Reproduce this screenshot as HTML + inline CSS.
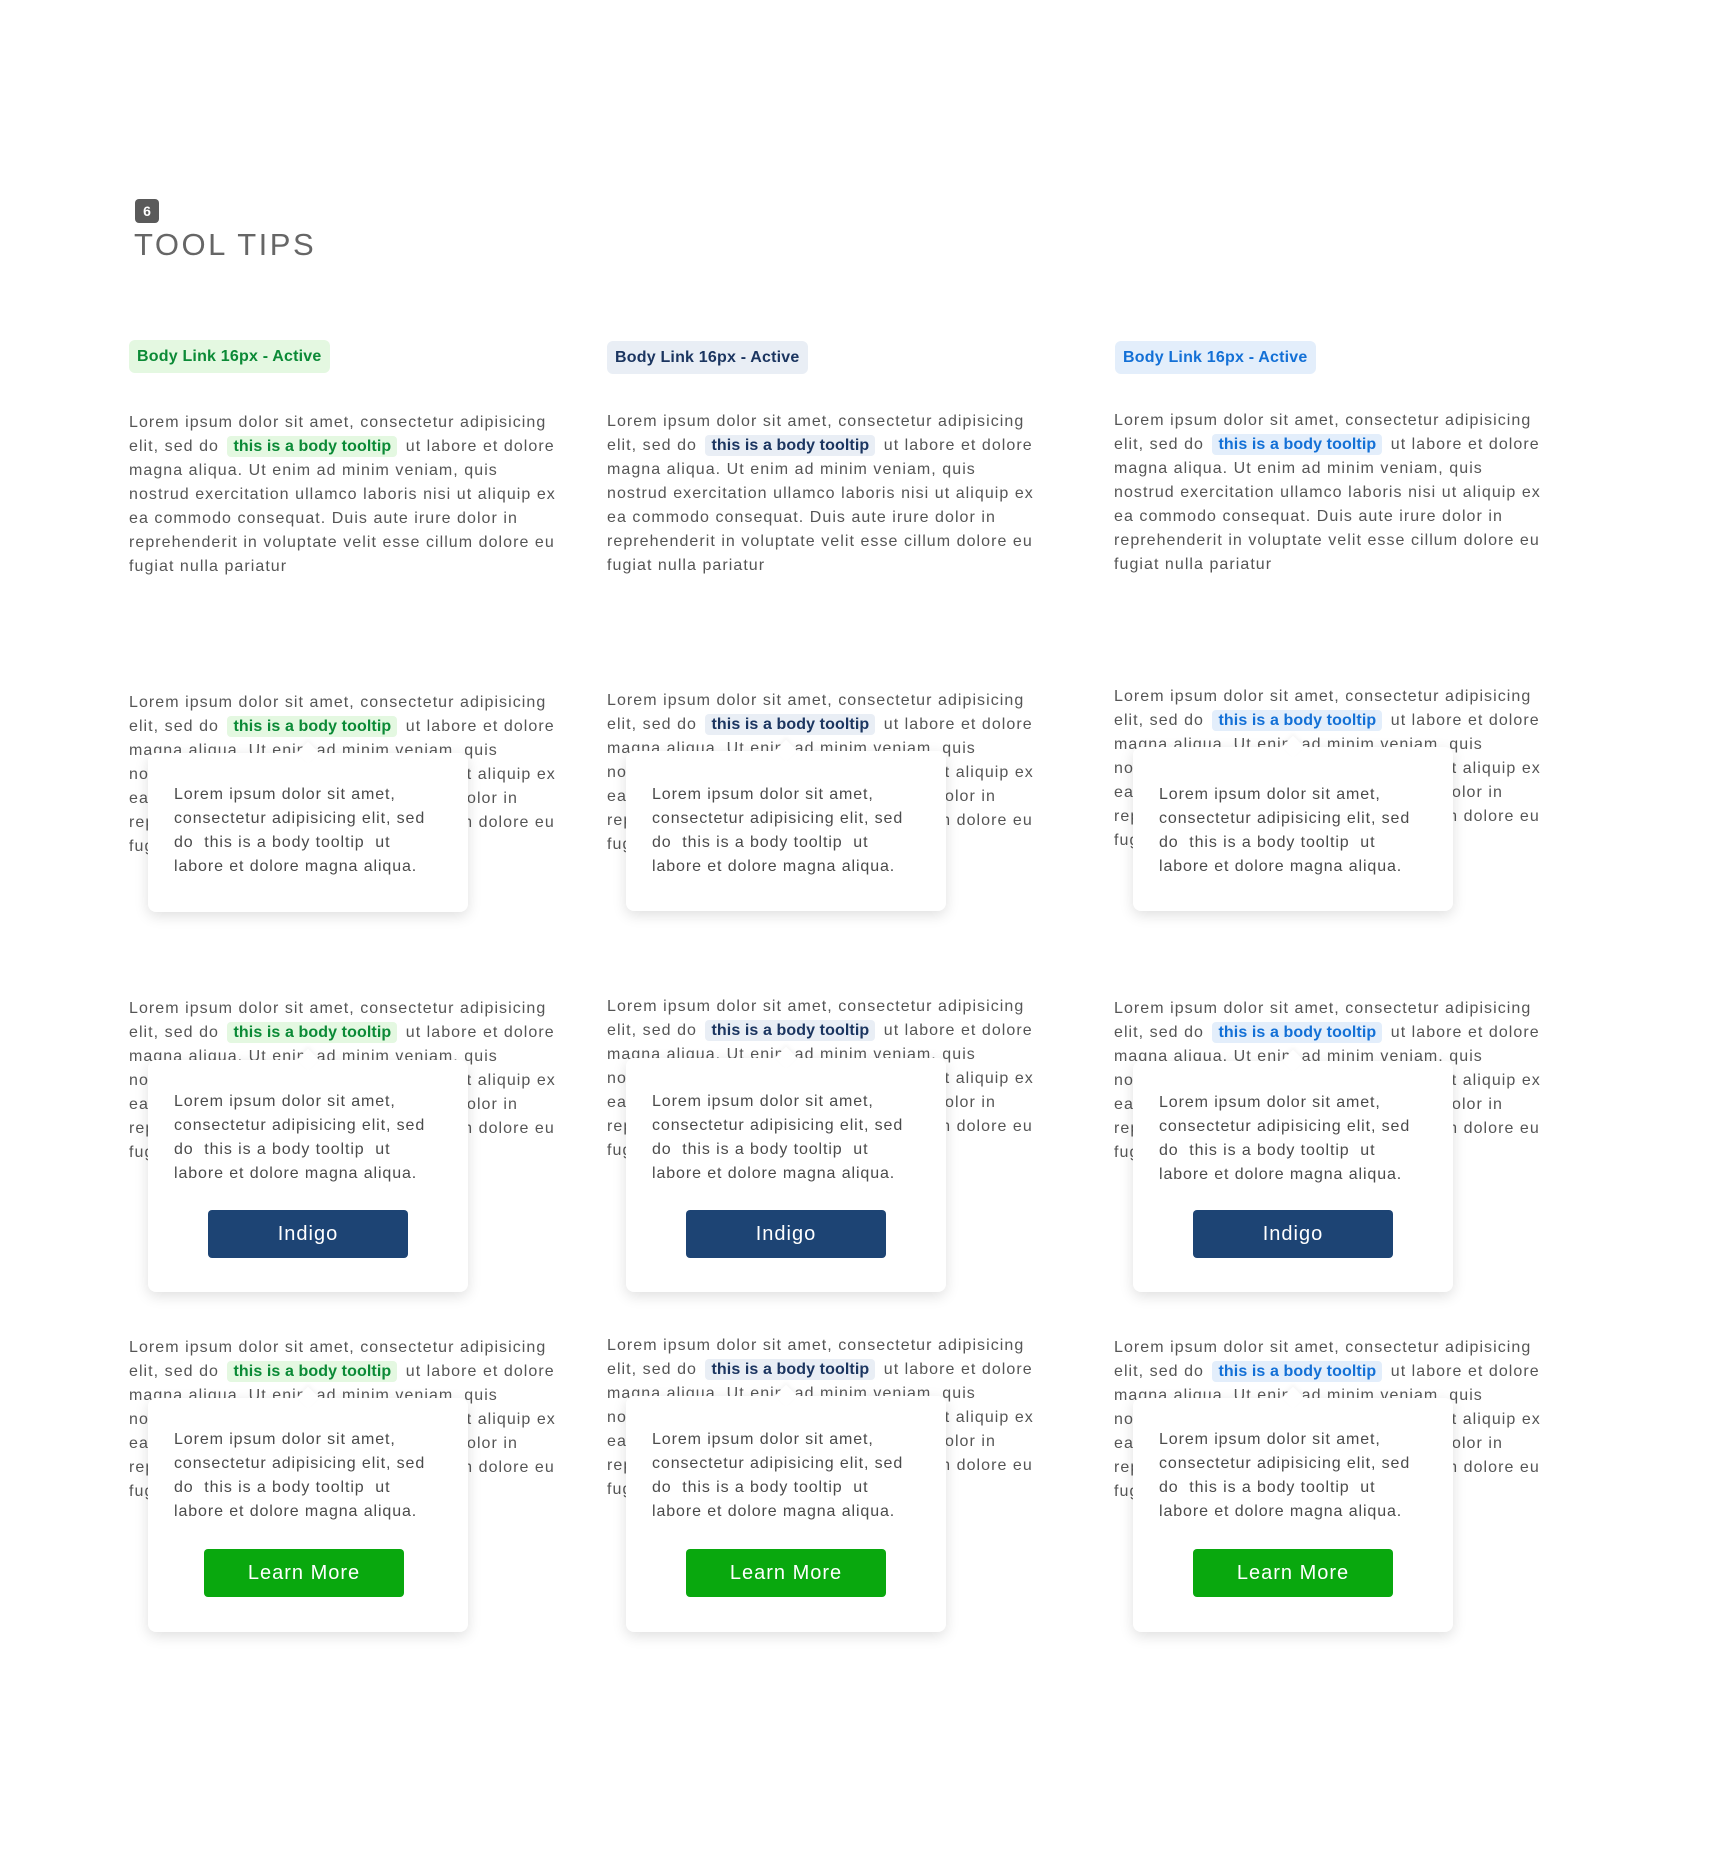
<!DOCTYPE html>
<html><head><meta charset="utf-8"><style>
*{margin:0;padding:0;box-sizing:border-box}
body{width:1734px;height:1860px;background:#fff;position:relative;overflow:hidden;font-family:"Liberation Sans",sans-serif;color:#555}
.badge{position:absolute;left:135px;top:199px;width:24px;height:24px;border-radius:4px;background:#5a5a5a;color:#fff;font-size:14px;font-weight:bold;text-align:center;line-height:24px}
.title{position:absolute;left:134px;top:227px;font-size:31px;letter-spacing:2.5px;color:#666;font-weight:normal}
.chip{position:absolute;height:33px;line-height:33px;padding:0 8px;border-radius:6px;font-weight:bold;font-size:16px;letter-spacing:.2px}
.g{--c:#0b8a36;--b:#e4f8e1}
.n{--c:#1b3560;--b:#e9eef5}
.l{--c:#1370d6;--b:#e3eefb}
.chip{color:var(--c);background:var(--b)}
.p{position:absolute;font-size:16px;letter-spacing:1.05px;line-height:24px;white-space:nowrap;color:#555}
.p div{height:24px}
.hl{color:var(--c);background:var(--b);font-weight:bold;letter-spacing:.1px;padding:2px 6px;border-radius:4px;margin:0 3px}
.tip{position:absolute;width:320px;background:#fff;border-radius:8px;box-shadow:0 4px 14px rgba(0,0,0,.13);z-index:2}
.tip:before{content:"";position:absolute;left:152px;top:-8px;width:16px;height:16px;background:#fff;transform:rotate(45deg);box-shadow:-2px -2px 4px rgba(0,0,0,.04)}
.tt{position:absolute;left:26px;top:30px;font-size:16px;letter-spacing:.9px;line-height:24px;white-space:nowrap;color:#4a4a4a}
.btn{position:absolute;left:60px;width:200px;height:48px;border-radius:4px;color:#fff;font-size:20px;letter-spacing:1px;text-align:center;line-height:48px}
.ind{background:#1d4474}.grn{background:#09a80e}
</style></head><body>
<div class="badge">6</div>
<div class="title">TOOL TIPS</div>

<div class="chip g" style="left:129px;top:340px">Body Link 16px - Active</div>
<div class="chip n" style="left:607px;top:341px">Body Link 16px - Active</div>
<div class="chip l" style="left:1115px;top:341px">Body Link 16px - Active</div>

<!-- Row 1 -->
<div class="p g" style="left:129px;top:411px"><div>Lorem ipsum dolor sit amet, consectetur adipisicing</div><div>elit, sed do <span class="hl">this is a body tooltip</span> ut labore et dolore</div><div>magna aliqua. Ut enim ad minim veniam, quis</div><div>nostrud exercitation ullamco laboris nisi ut aliquip ex</div><div>ea commodo consequat. Duis aute irure dolor in</div><div>reprehenderit in voluptate velit esse cillum dolore eu</div><div>fugiat nulla pariatur</div></div>
<div class="p n" style="left:607px;top:410px"><div>Lorem ipsum dolor sit amet, consectetur adipisicing</div><div>elit, sed do <span class="hl">this is a body tooltip</span> ut labore et dolore</div><div>magna aliqua. Ut enim ad minim veniam, quis</div><div>nostrud exercitation ullamco laboris nisi ut aliquip ex</div><div>ea commodo consequat. Duis aute irure dolor in</div><div>reprehenderit in voluptate velit esse cillum dolore eu</div><div>fugiat nulla pariatur</div></div>
<div class="p l" style="left:1114px;top:409px"><div>Lorem ipsum dolor sit amet, consectetur adipisicing</div><div>elit, sed do <span class="hl">this is a body tooltip</span> ut labore et dolore</div><div>magna aliqua. Ut enim ad minim veniam, quis</div><div>nostrud exercitation ullamco laboris nisi ut aliquip ex</div><div>ea commodo consequat. Duis aute irure dolor in</div><div>reprehenderit in voluptate velit esse cillum dolore eu</div><div>fugiat nulla pariatur</div></div>

<!-- Row 2 -->
<div class="p g" style="left:129px;top:691px"><div>Lorem ipsum dolor sit amet, consectetur adipisicing</div><div>elit, sed do <span class="hl">this is a body tooltip</span> ut labore et dolore</div><div>magna aliqua. Ut enim ad minim veniam, quis</div><div>nostrud exercitation ullamco laboris nisi ut aliquip ex</div><div>ea commodo consequat. Duis aute irure dolor in</div><div>reprehenderit in voluptate velit esse cillum dolore eu</div><div>fugiat nulla pariatur</div></div>
<div class="tip" style="left:148px;top:753px;height:159px"><div class="tt"><div>Lorem ipsum dolor sit amet,</div><div>consectetur adipisicing elit, sed</div><div>do&nbsp; this is a body tooltip&nbsp; ut</div><div>labore et dolore magna aliqua.</div></div></div>
<div class="p n" style="left:607px;top:689px"><div>Lorem ipsum dolor sit amet, consectetur adipisicing</div><div>elit, sed do <span class="hl">this is a body tooltip</span> ut labore et dolore</div><div>magna aliqua. Ut enim ad minim veniam, quis</div><div>nostrud exercitation ullamco laboris nisi ut aliquip ex</div><div>ea commodo consequat. Duis aute irure dolor in</div><div>reprehenderit in voluptate velit esse cillum dolore eu</div><div>fugiat nulla pariatur</div></div>
<div class="tip" style="left:626px;top:751px;height:160px"><div class="tt" style="top:32px"><div>Lorem ipsum dolor sit amet,</div><div>consectetur adipisicing elit, sed</div><div>do&nbsp; this is a body tooltip&nbsp; ut</div><div>labore et dolore magna aliqua.</div></div></div>
<div class="p l" style="left:1114px;top:685px"><div>Lorem ipsum dolor sit amet, consectetur adipisicing</div><div>elit, sed do <span class="hl">this is a body tooltip</span> ut labore et dolore</div><div>magna aliqua. Ut enim ad minim veniam, quis</div><div>nostrud exercitation ullamco laboris nisi ut aliquip ex</div><div>ea commodo consequat. Duis aute irure dolor in</div><div>reprehenderit in voluptate velit esse cillum dolore eu</div><div>fugiat nulla pariatur</div></div>
<div class="tip" style="left:1133px;top:747px;height:164px"><div class="tt" style="top:36px"><div>Lorem ipsum dolor sit amet,</div><div>consectetur adipisicing elit, sed</div><div>do&nbsp; this is a body tooltip&nbsp; ut</div><div>labore et dolore magna aliqua.</div></div></div>

<!-- Row 3 -->
<div class="p g" style="left:129px;top:997px"><div>Lorem ipsum dolor sit amet, consectetur adipisicing</div><div>elit, sed do <span class="hl">this is a body tooltip</span> ut labore et dolore</div><div>magna aliqua. Ut enim ad minim veniam, quis</div><div>nostrud exercitation ullamco laboris nisi ut aliquip ex</div><div>ea commodo consequat. Duis aute irure dolor in</div><div>reprehenderit in voluptate velit esse cillum dolore eu</div><div>fugiat nulla pariatur</div></div>
<div class="tip" style="left:148px;top:1060px;height:232px"><div class="tt" style="top:30px"><div>Lorem ipsum dolor sit amet,</div><div>consectetur adipisicing elit, sed</div><div>do&nbsp; this is a body tooltip&nbsp; ut</div><div>labore et dolore magna aliqua.</div></div><div class="btn ind" style="top:150px">Indigo</div></div>
<div class="p n" style="left:607px;top:995px"><div>Lorem ipsum dolor sit amet, consectetur adipisicing</div><div>elit, sed do <span class="hl">this is a body tooltip</span> ut labore et dolore</div><div>magna aliqua. Ut enim ad minim veniam, quis</div><div>nostrud exercitation ullamco laboris nisi ut aliquip ex</div><div>ea commodo consequat. Duis aute irure dolor in</div><div>reprehenderit in voluptate velit esse cillum dolore eu</div><div>fugiat nulla pariatur</div></div>
<div class="tip" style="left:626px;top:1058px;height:234px"><div class="tt" style="top:32px"><div>Lorem ipsum dolor sit amet,</div><div>consectetur adipisicing elit, sed</div><div>do&nbsp; this is a body tooltip&nbsp; ut</div><div>labore et dolore magna aliqua.</div></div><div class="btn ind" style="top:152px">Indigo</div></div>
<div class="p l" style="left:1114px;top:997px"><div>Lorem ipsum dolor sit amet, consectetur adipisicing</div><div>elit, sed do <span class="hl">this is a body tooltip</span> ut labore et dolore</div><div>magna aliqua. Ut enim ad minim veniam, quis</div><div>nostrud exercitation ullamco laboris nisi ut aliquip ex</div><div>ea commodo consequat. Duis aute irure dolor in</div><div>reprehenderit in voluptate velit esse cillum dolore eu</div><div>fugiat nulla pariatur</div></div>
<div class="tip" style="left:1133px;top:1061px;height:231px"><div class="tt" style="top:30px"><div>Lorem ipsum dolor sit amet,</div><div>consectetur adipisicing elit, sed</div><div>do&nbsp; this is a body tooltip&nbsp; ut</div><div>labore et dolore magna aliqua.</div></div><div class="btn ind" style="top:149px">Indigo</div></div>

<!-- Row 4 -->
<div class="p g" style="left:129px;top:1336px"><div>Lorem ipsum dolor sit amet, consectetur adipisicing</div><div>elit, sed do <span class="hl">this is a body tooltip</span> ut labore et dolore</div><div>magna aliqua. Ut enim ad minim veniam, quis</div><div>nostrud exercitation ullamco laboris nisi ut aliquip ex</div><div>ea commodo consequat. Duis aute irure dolor in</div><div>reprehenderit in voluptate velit esse cillum dolore eu</div><div>fugiat nulla pariatur</div></div>
<div class="tip" style="left:148px;top:1398px;height:234px"><div class="tt"><div>Lorem ipsum dolor sit amet,</div><div>consectetur adipisicing elit, sed</div><div>do&nbsp; this is a body tooltip&nbsp; ut</div><div>labore et dolore magna aliqua.</div></div><div class="btn grn" style="top:151px;left:56px">Learn More</div></div>
<div class="p n" style="left:607px;top:1334px"><div>Lorem ipsum dolor sit amet, consectetur adipisicing</div><div>elit, sed do <span class="hl">this is a body tooltip</span> ut labore et dolore</div><div>magna aliqua. Ut enim ad minim veniam, quis</div><div>nostrud exercitation ullamco laboris nisi ut aliquip ex</div><div>ea commodo consequat. Duis aute irure dolor in</div><div>reprehenderit in voluptate velit esse cillum dolore eu</div><div>fugiat nulla pariatur</div></div>
<div class="tip" style="left:626px;top:1396px;height:236px"><div class="tt" style="top:32px"><div>Lorem ipsum dolor sit amet,</div><div>consectetur adipisicing elit, sed</div><div>do&nbsp; this is a body tooltip&nbsp; ut</div><div>labore et dolore magna aliqua.</div></div><div class="btn grn" style="top:153px">Learn More</div></div>
<div class="p l" style="left:1114px;top:1336px"><div>Lorem ipsum dolor sit amet, consectetur adipisicing</div><div>elit, sed do <span class="hl">this is a body tooltip</span> ut labore et dolore</div><div>magna aliqua. Ut enim ad minim veniam, quis</div><div>nostrud exercitation ullamco laboris nisi ut aliquip ex</div><div>ea commodo consequat. Duis aute irure dolor in</div><div>reprehenderit in voluptate velit esse cillum dolore eu</div><div>fugiat nulla pariatur</div></div>
<div class="tip" style="left:1133px;top:1398px;height:234px"><div class="tt"><div>Lorem ipsum dolor sit amet,</div><div>consectetur adipisicing elit, sed</div><div>do&nbsp; this is a body tooltip&nbsp; ut</div><div>labore et dolore magna aliqua.</div></div><div class="btn grn" style="top:151px">Learn More</div></div>
</body></html>
